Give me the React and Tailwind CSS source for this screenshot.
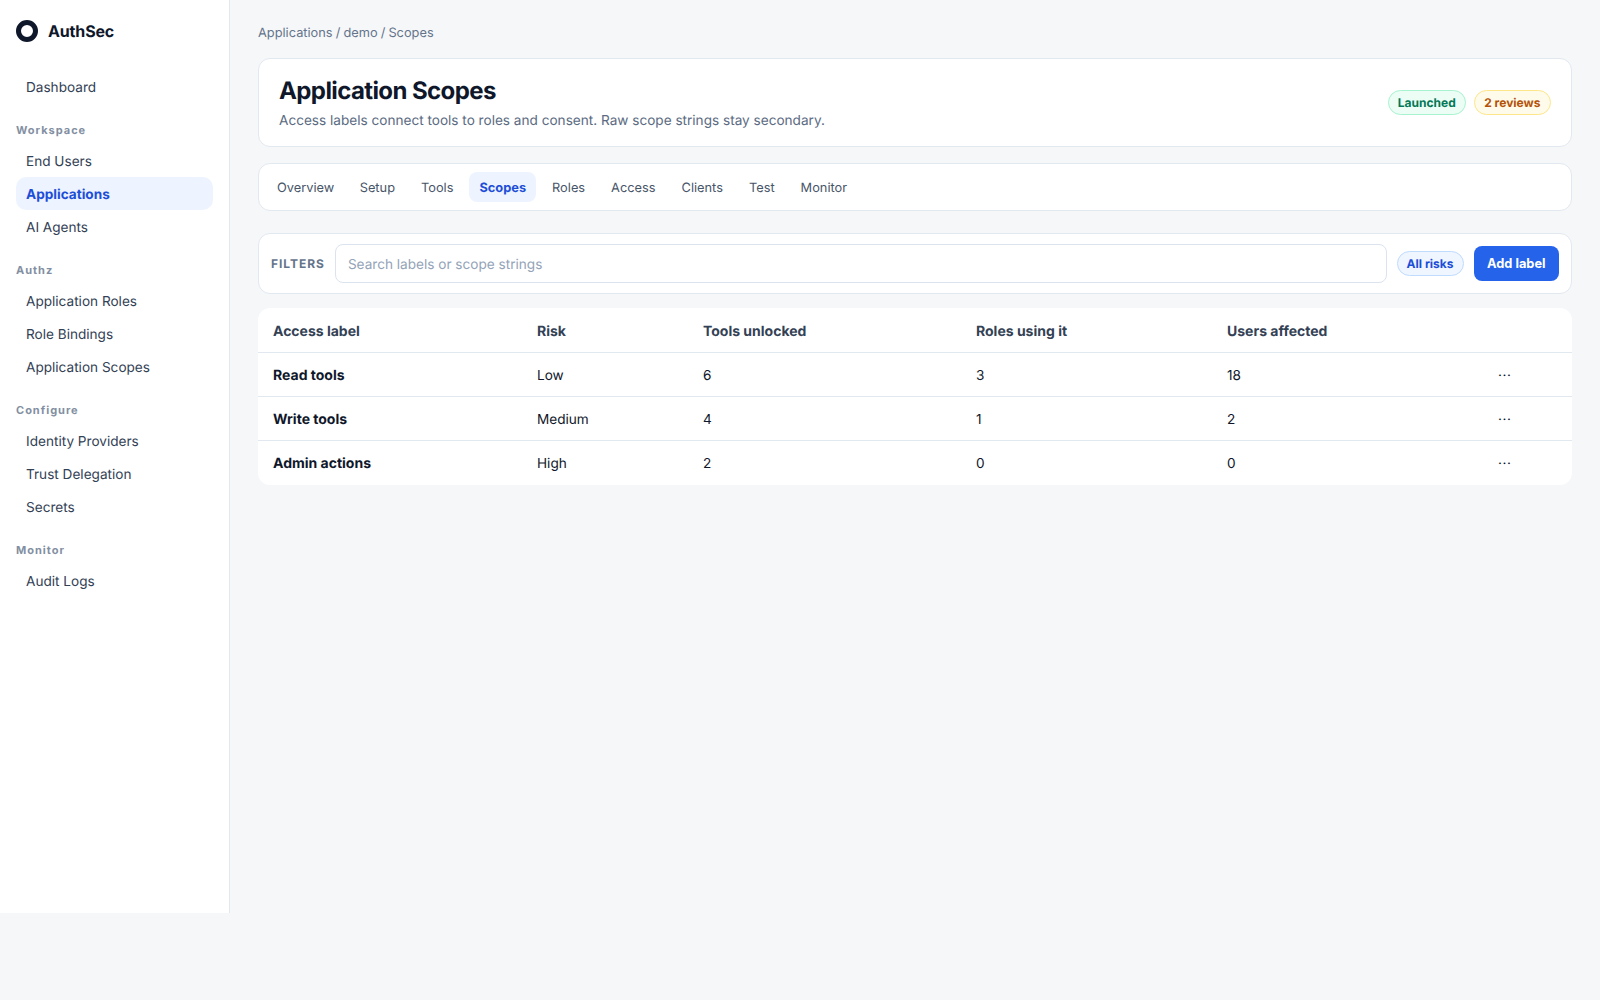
const sections = [
  { items: ["Dashboard"] },
  { title: "Workspace", items: ["End Users", "Applications", "AI Agents"] },
  { title: "Authz", items: ["Application Roles", "Role Bindings", "Application Scopes"] },
  { title: "Configure", items: ["Identity Providers", "Trust Delegation", "Secrets"] },
  { title: "Monitor", items: ["Audit Logs"] },
];
const tabs = ["Overview", "Setup", "Tools", "Scopes", "Roles", "Access", "Clients", "Test", "Monitor"];
const rows = [
  ["Read tools", "Low", "6", "3", "18"],
  ["Write tools", "Medium", "4", "1", "2"],
  ["Admin actions", "High", "2", "0", "0"],
];

export default function App() {
  return (
    <div className="flex min-h-[1000px] items-start bg-[#f6f7f9] font-['Inter',sans-serif] text-[13.6px] text-[#0f172a] [text-rendering:geometricPrecision]">
      <aside className="h-[913px] w-[230px] shrink-0 border-r border-[#e2e8f0] bg-white p-4">
        <div className="mb-[28px] mt-1 flex h-[22px] items-center gap-[10px]">
          <div className="h-[22px] w-[22px] rounded-full border-[5px] border-[#0f172a]" />
          <span className="text-[16px] font-bold tracking-[-0.01em]">AuthSec</span>
        </div>
        {sections.map((s, i) => (
          <div key={i} className="mb-[12px]">
            {s.title && (
              <div className="mb-[4px] mt-[17px] h-[20px] text-[11px] font-bold leading-[20px] tracking-[0.09em] text-[#64748b] opacity-80">
                {s.title}
              </div>
            )}
            {s.items.map((it) => (
              <div
                key={it}
                className={
                  it === "Applications"
                    ? "h-[33px] rounded-[10px] bg-[#eef4ff] px-[10px] font-bold leading-[36px] text-[#1d4ed8]"
                    : "h-[33px] px-[10px] leading-[36px] text-[#334155]"
                }
              >
                {it}
              </div>
            ))}
          </div>
        ))}
      </aside>
      <main className="min-w-0 flex-1 px-7 pt-6">
        <div className="mb-4 h-[18px] text-[12.8px] leading-[20px] text-[#64748b] [word-spacing:-0.5px]">Applications / demo / Scopes</div>
        <div className="mb-4 flex h-[89px] items-center justify-between rounded-xl border border-[#e2e8f0] bg-white px-5">
          <div className="pt-[1px]">
            <h1 className="text-[24px] font-bold leading-[30px] tracking-tight">Application Scopes</h1>
            <p className="mt-[5px] leading-5 text-[#5b6b82]">
              Access labels connect tools to roles and consent. Raw scope strings stay secondary.
            </p>
          </div>
          <div className="flex gap-2">
            <span className="h-[25px] rounded-full border border-[#a7f3d0] bg-[#ecfdf5] px-[9px] text-[12px] font-bold leading-[23px] text-[#047857]">Launched</span>
            <span className="h-[25px] rounded-full border border-[#fde68a] bg-[#fffbeb] px-[9.5px] text-[12px] font-bold leading-[23px] text-[#b45309]">2 reviews</span>
          </div>
        </div>
        <div className="mb-[22px] flex h-[48px] items-center gap-[6px] rounded-xl border border-[#e2e8f0] bg-white px-2">
          {tabs.map((t) => (
            <div
              key={t}
              className={
                t === "Scopes"
                  ? "h-[30px] rounded-lg bg-[#eef4ff] px-[10px] text-[12.8px] font-bold leading-[33px] text-[#1d4ed8]"
                  : "h-[30px] px-[10px] text-[12.8px] leading-[33px] text-[#475569] first:mr-[-0.5px]"
              }
            >
              {t}
            </div>
          ))}
        </div>
        <div className="mb-[14px] flex h-[61px] items-center gap-[10px] rounded-xl border border-[#e2e8f0] bg-white px-3">
          <span className="text-[12px] font-bold tracking-[0.08em] text-[#64748b]">FILTERS</span>
          <div className="h-[39px] flex-1 rounded-lg border border-[#dbe3ef] px-3 leading-[40px] text-[#94a3b8]">
            Search labels or scope strings
          </div>
          <span className="h-[25px] rounded-full border border-[#bfdbfe] bg-[#eff6ff] px-[9px] text-[12px] font-bold leading-[23px] text-[#1d4ed8]">All risks</span>
          <button className="h-[35px] rounded-lg bg-[#2563eb] px-[13.5px] text-[12.8px] font-bold text-white">Add label</button>
        </div>
        <div className="overflow-hidden rounded-xl bg-white pb-[1px]">
          <table className="w-full table-fixed border-collapse text-left">
            <thead>
              <tr className="h-[44px] border-b border-[#e2e8f0] text-[14px] text-[#334155]">
                <th className="w-[279px] pl-[15px] pt-[3px] font-bold">Access label</th>
                <th className="w-[166px] pt-[3px] font-bold">Risk</th>
                <th className="w-[273px] pt-[3px] font-bold">Tools unlocked</th>
                <th className="w-[251px] pt-[3px] font-bold">Roles using it</th>
                <th className="w-[271px] pt-[3px] font-bold">Users affected</th>
                <th />
              </tr>
            </thead>
            <tbody className="leading-5">
              {rows.map((r, i) => (
                <tr key={r[0]} className={i < 2 ? "h-[44px] border-b border-[#e2e8f0]" : "h-[44px]"}>
                  <td className="pl-[15px] pt-[3px] text-[14px] font-bold">{r[0]}</td>
                  <td className="pt-[3px]">{r[1]}</td>
                  <td className="pt-[3px]">{r[2]}</td>
                  <td className="pt-[3px]">{r[3]}</td>
                  <td className="pt-[3px]">{r[4]}</td>
                  <td className="pt-[3px] tracking-[0.04em]">···</td>
                </tr>
              ))}
            </tbody>
          </table>
        </div>
      </main>
    </div>
  );
}
